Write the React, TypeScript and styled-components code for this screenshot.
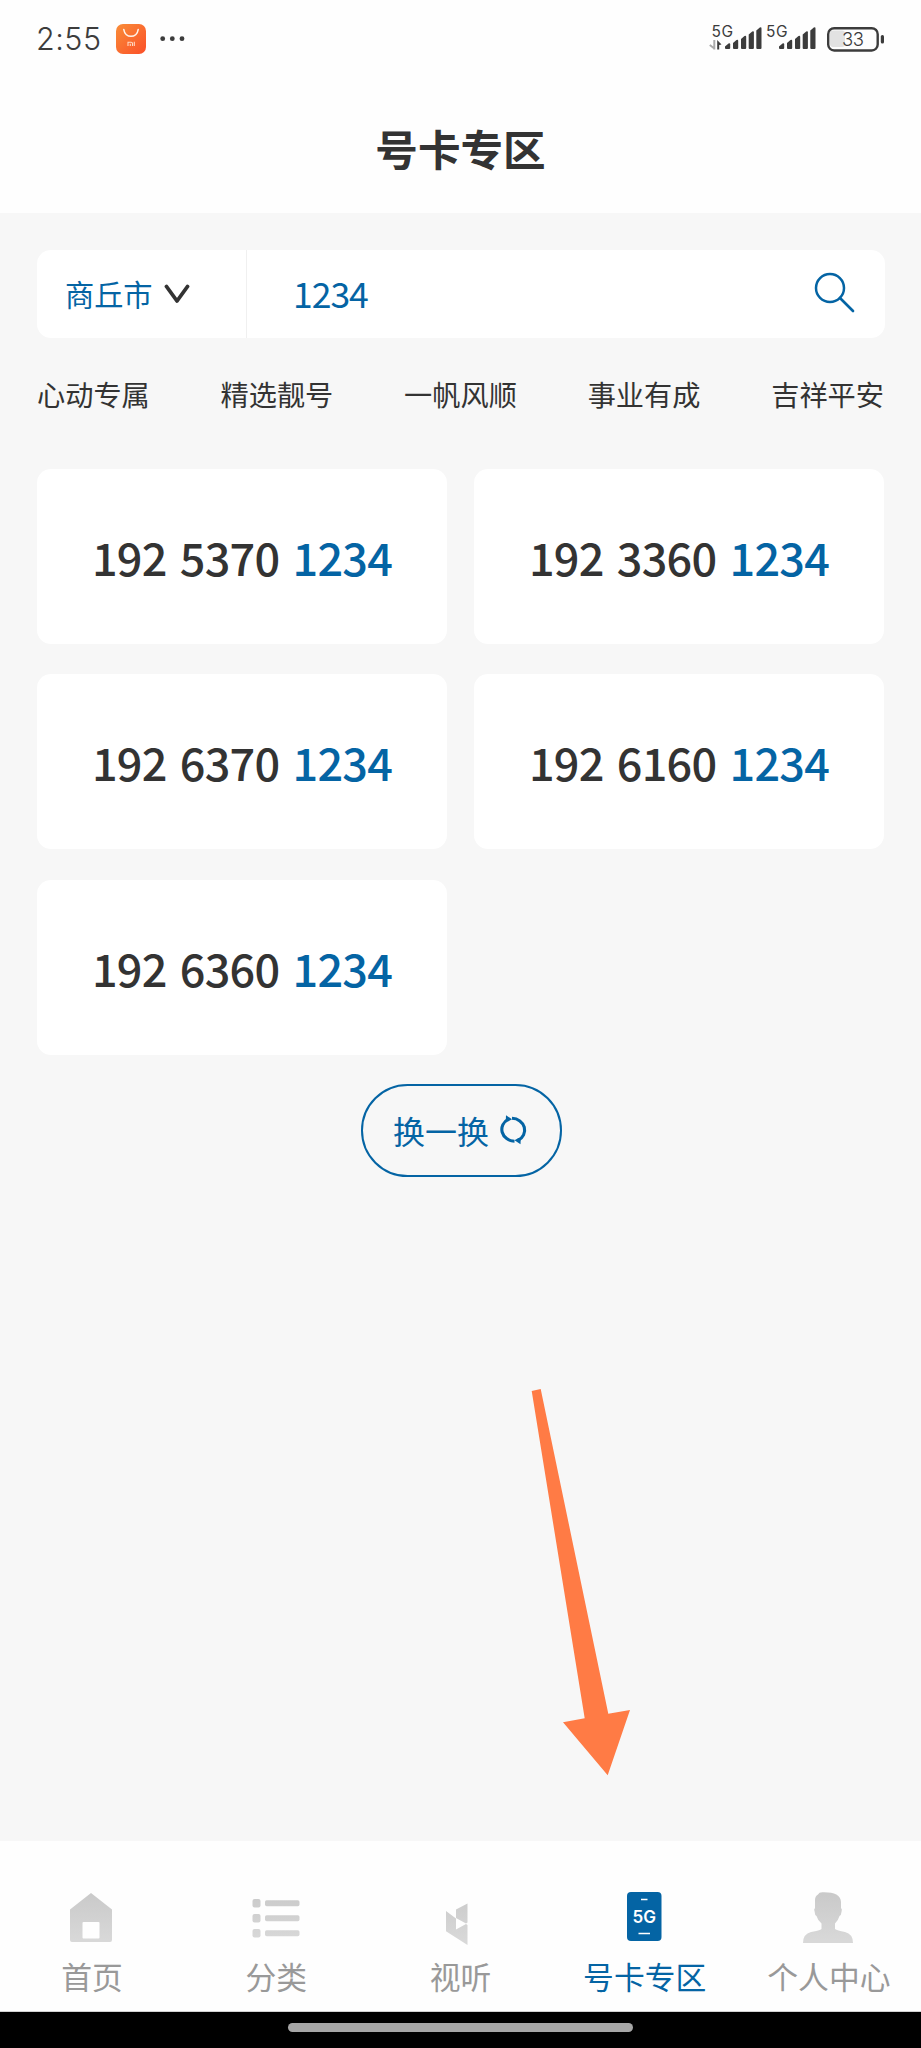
import React from "react";
import styled, { createGlobalStyle } from "styled-components";

const BLUE = "#0464a4";
const INK = "#333333";

const GlobalStyle = createGlobalStyle`
  * { box-sizing: border-box; }
  body {
    margin: 0;
    background: #f7f7f7;
    font-family: "Noto Sans CJK SC", "Noto Sans", sans-serif;
    color: ${INK};
  }
  button, input { font: inherit; color: inherit; background: none; border: 0; padding: 0; margin: 0; }
  input { outline: none; }
  svg { display: block; flex: none; }
`;

const Screen = styled.div`
  position: relative;
  display: flex;
  flex-direction: column;
  width: 921px;
  height: 2048px;
  overflow: hidden;
`;

const StatusBar = styled.div`
  display: flex;
  align-items: center;
  justify-content: space-between;
  height: 78px;
  padding: 0 35px 0 36px;
  background: #fefefe;
`;

const StatusLeft = styled.div`
  display: flex;
  align-items: center;
`;

const Clock = styled.span`
  width: 80px;
  font: 350 30.5px/36px Inter, sans-serif;
  letter-spacing: 0.5px;
  color: #3c3c3c;
`;

const Header = styled.header`
  display: flex;
  align-items: center;
  justify-content: center;
  height: 135px;
  padding-top: 5px;
  background: #fefefe;
`;

const Title = styled.h1`
  margin: 0;
  font-size: 42.6px;
  line-height: 60px;
  font-weight: 700;
`;

const Content = styled.main`
  display: flex;
  flex-direction: column;
  flex: 1;
  padding: 37px 36px 0 37px;
  background: #f7f7f7;
`;

const SearchBar = styled.div`
  display: flex;
  height: 87.5px;
  border-radius: 14px;
  background: #fff;
`;

const CityButton = styled.button`
  display: flex;
  align-items: center;
  gap: 11px;
  width: 210px;
  padding: 0 0 2px 28px;
  border-right: 1px solid #f0f0f0;
  font-size: 29.2px;
  color: ${BLUE};
  svg { margin-top: 3px; }
`;

const SearchInput = styled.input`
  flex: 1;
  min-width: 0;
  padding: 0 0 3px 46px;
  font-size: 35.5px;
  letter-spacing: -1px;
  color: ${BLUE};
`;

const SearchButton = styled.button`
  width: 72px;
  padding-bottom: 4px;
`;

const Categories = styled.nav`
  display: flex;
  justify-content: space-between;
  margin: 35.5px 1px 0 0;
  font-size: 28.2px;
  line-height: 42px;
`;

const NumberGrid = styled.div`
  display: grid;
  grid-template-columns: 410px 410px;
  grid-auto-rows: 175px;
  column-gap: 27px;
  row-gap: 30.3px;
  margin-top: 54px;
`;

const NumberCard = styled.div`
  display: flex;
  align-items: center;
  justify-content: center;
  border-radius: 14px;
  background: #fff;
  font-size: 45px;
  font-weight: 500;
  letter-spacing: -0.8px;
  word-spacing: 4px;
  white-space: pre;
`;

const Tail = styled.span`
  color: ${BLUE};
`;

const RefreshButton = styled.button`
  display: flex;
  align-items: center;
  justify-content: center;
  align-self: center;
  gap: 9px;
  width: 201px;
  height: 93px;
  margin-top: 29px;
  border: 2.5px solid ${BLUE};
  border-radius: 47px;
  font-size: 32px;
  color: ${BLUE};
`;

const TabBar = styled.nav`
  display: flex;
  height: 171px;
  background: #fefefe;
  border-bottom: 1px solid #d2d2d2;
`;

const Tab = styled.a<{ $active?: boolean }>`
  display: flex;
  flex: 1;
  flex-direction: column;
  align-items: center;
  padding-top: 47px;
  font-size: 30.8px;
  line-height: 44px;
  white-space: nowrap;
  color: ${(p) => (p.$active ? BLUE : "#999")};
  svg { margin-bottom: 8px; }
`;

const GestureBar = styled.div`
  display: flex;
  justify-content: center;
  height: 36px;
  padding-top: 11px;
  background: #000;
`;

const GesturePill = styled.div`
  width: 345px;
  height: 9px;
  border-radius: 5px;
  background: #a6a6a6;
`;

const Pointer = styled.svg`
  position: absolute;
  left: 520px;
  top: 1380px;
`;

const StoreIcon = () => (
  <svg width="70" height="30" viewBox="0 0 70 30">
    <defs>
      <linearGradient id="store" x1="0" y1="0" x2="1" y2="1">
        <stop offset="0" stopColor="#f98d38" />
        <stop offset="1" stopColor="#fb4f28" />
      </linearGradient>
    </defs>
    <rect width="30" height="30" rx="7" fill="url(#store)" />
    <path d="M7.8 5.5C9 14.5 21 14.5 22.2 5.5" fill="none" stroke="#fff3e8" strokeWidth="1.6" strokeLinecap="round" />
    <path d="M12 22v-3.8h3.2q1.3 0 1.3 1.3V22M14.3 19.8V22M18.3 17.8V22" fill="none" stroke="#ffd9c4" strokeWidth="1.1" />
    <g fill="#3c3c3c">
      <circle cx="46.7" cy="14.7" r="2.4" />
      <circle cx="56.3" cy="14.7" r="2.4" />
      <circle cx="66" cy="14.7" r="2.4" />
    </g>
  </svg>
);

const bars = [
  [0, 17.5],
  [8, 14],
  [16, 10],
  [23.7, 5.5],
  [31.3, 1.5],
];

const Bars = ({ x }: { x: number }) => (
  <g transform={`translate(${x} 2)`} fill="#3c3c3c">
    {bars.map(([bx, top]) => (
      <path key={bx} d={`M${bx} ${top + 3}L${bx + 3.5} ${top}Q${bx + 5.2} ${top - 1} ${bx + 5.2} ${top + 1}V22q0 1-1 1h-3.2q-1 0-1-1z`} />
    ))}
  </g>
);

const StatusIcons = () => (
  <svg width="177" height="50" viewBox="0 -10 177 50" fontFamily="Inter, sans-serif" fill="#3c3c3c">
    <text x="2.5" y="12.5" fontSize="15.5" textLength="21.5">5G</text>
    <path d="M5.3 16v9.5M5.3 24.5L.8 21" stroke="#aaa" strokeWidth="2" fill="none" />
    <path d="M8.2 25.5V16l4.3 4.5-2.3.5v4.5z" />
    <Bars x={16} />
    <text x="57" y="12.5" fontSize="15.5" textLength="21.5">5G</text>
    <Bars x={70} />
    <rect x="121" y="6.5" width="15" height="16.5" rx="3" fill="#e2e2e2" />
    <rect x="119.2" y="4.2" width="49.5" height="22.3" rx="6" fill="none" stroke="#3c3c3c" strokeWidth="2.4" />
    <rect x="171.8" y="11" width="3.2" height="8.5" rx="1.5" />
    <text x="133" y="22.3" fontSize="18.5" fontWeight="300" textLength="22">33</text>
  </svg>
);

const Chevron = () => (
  <svg width="26" height="20" viewBox="0 0 26 20">
    <path d="M2.5 2.5L13 17L23.5 2.5" fill="none" stroke={INK} strokeWidth="3.8" strokeLinecap="round" strokeLinejoin="round" />
  </svg>
);

const SearchIcon = () => (
  <svg width="42" height="42" viewBox="0 0 42 42">
    <circle cx="17" cy="17" r="14" fill="none" stroke={BLUE} strokeWidth="2.5" />
    <path d="M27 27L40 40" stroke={BLUE} strokeWidth="2.7" strokeLinecap="round" />
  </svg>
);

const RefreshIcon = () => (
  <svg width="31" height="30" viewBox="0 0 31 30">
    <g fill="none" stroke={BLUE} strokeWidth="3.1">
      <path d="M10.5 4.1A13 11.8 0 0 0 16.5 26.2" />
      <path d="M20 25.4A13 11.8 0 0 0 14 3.300" />
    </g>
    <path d="M8 .3L14 4.2L10 6.500L7.800 5zM22.500 29.200L16.500 25.300L20.500 23L22.700 24.500z" fill={BLUE} />
  </svg>
);

const TabGradient = () => (
  <svg width="0" height="0" style={{ position: "absolute" }}>
    <linearGradient id="tab" x1="0" y1="0" x2="0" y2="52" gradientUnits="userSpaceOnUse">
      <stop offset="0" stopColor="#c8c8c8" />
      <stop offset="1" stopColor="#d8d8d8" />
    </linearGradient>
  </svg>
);

const HomeIcon = () => (
  <svg width="54" height="58" viewBox="0 0 54 58">
    <path fillRule="evenodd" fill="url(#tab)" d="M26 5L47 21.5V52q0 2-2 2H7q-2 0-2-2V21.5zM18.5 34q-1 0-1 1v14.5q0 1 1 1h15q1 0 1-1V35q0-1-1-1z" />
  </svg>
);

const ListIcon = () => (
  <svg width="54" height="58" viewBox="0 0 54 58" fill="url(#tab)">
    {[11, 26, 41].map((y) => (
      <React.Fragment key={y}>
        <rect x="3.5" y={y} width="8" height="8.5" rx="2" />
        <rect x="16" y={y + 1.2} width="34.5" height="6" rx="1.7" />
      </React.Fragment>
    ))}
  </svg>
);

const MediaIcon = () => (
  <svg width="54" height="58" viewBox="0 0 54 58" fill="url(#tab)">
    <path d="M12 23L22 30.5V41.5L32 36L33.5 37V57L12 43.2zM22 21.5L33.5 15.5V34.5L32 35.5L22 30z" />
  </svg>
);

const PhoneIcon = () => (
  <svg width="54" height="58" viewBox="0 0 54 58">
    <rect x="9" y="4" width="34.5" height="49" rx="4" fill={BLUE} />
    <path d="M23 11.5h6.5M20.5 45.5h11.5" stroke="#fff" strokeWidth="1.4" />
    <text x="14.5" y="35" fontFamily="Inter, sans-serif" fontWeight="600" fontSize="17" textLength="23.5" lengthAdjust="spacingAndGlyphs" fill="#fff">5G</text>
  </svg>
);

const PersonIcon = () => (
  <svg width="54" height="58" viewBox="0 0 54 58">
    <path fill="url(#tab)" d="M16 6.5Q17 4 21 4.2C32 4 39 7 39 14V20Q40.5 21 39.5 24Q39.3 27 37.5 28Q36 33 33 35.5V41Q35 42.5 43 44Q51 46 51 55H1Q1 46 9 44Q18 42.5 19.5 41V35.5Q16 33 14.5 28Q12.7 27 12.7 24Q11.5 21 13 20V12Q13 8 16 6.5z" />
  </svg>
);

const categories = ["心动专属", "精选靓号", "一帆风顺", "事业有成", "吉祥平安"];
const numbers = ["192 5370", "192 3360", "192 6370", "192 6160", "192 6360"];
const tabs = [
  { label: "首页", Icon: HomeIcon },
  { label: "分类", Icon: ListIcon },
  { label: "视听", Icon: MediaIcon },
  { label: "号卡专区", Icon: PhoneIcon, active: true },
  { label: "个人中心", Icon: PersonIcon },
];

export default function App() {
  return (
    <Screen>
      <GlobalStyle />
      <TabGradient />
      <StatusBar>
        <StatusLeft>
          <Clock>2:55</Clock>
          <StoreIcon />
        </StatusLeft>
        <StatusIcons />
      </StatusBar>
      <Header>
        <Title>号卡专区</Title>
      </Header>
      <Content>
        <SearchBar>
          <CityButton>
            商丘市
            <Chevron />
          </CityButton>
          <SearchInput defaultValue="1234" />
          <SearchButton aria-label="搜索">
            <SearchIcon />
          </SearchButton>
        </SearchBar>
        <Categories>
          {categories.map((name) => (
            <span key={name}>{name}</span>
          ))}
        </Categories>
        <NumberGrid>
          {numbers.map((n) => (
            <NumberCard key={n}>
              {n} <Tail>1234</Tail>
            </NumberCard>
          ))}
        </NumberGrid>
        <RefreshButton>
          换一换
          <RefreshIcon />
        </RefreshButton>
      </Content>
      <TabBar>
        {tabs.map(({ label, Icon, active }) => (
          <Tab key={label} $active={active}>
            <Icon />
            {label}
          </Tab>
        ))}
      </TabBar>
      <GestureBar>
        <GesturePill />
      </GestureBar>
      <Pointer width="120" height="400" viewBox="0 0 120 400">
        <path d="M11.7 11L20.7 9L88.3 333.7L110 330L87.7 395.3L43 342.3L64.7 338.3z" fill="#ff7b45" />
      </Pointer>
    </Screen>
  );
}
